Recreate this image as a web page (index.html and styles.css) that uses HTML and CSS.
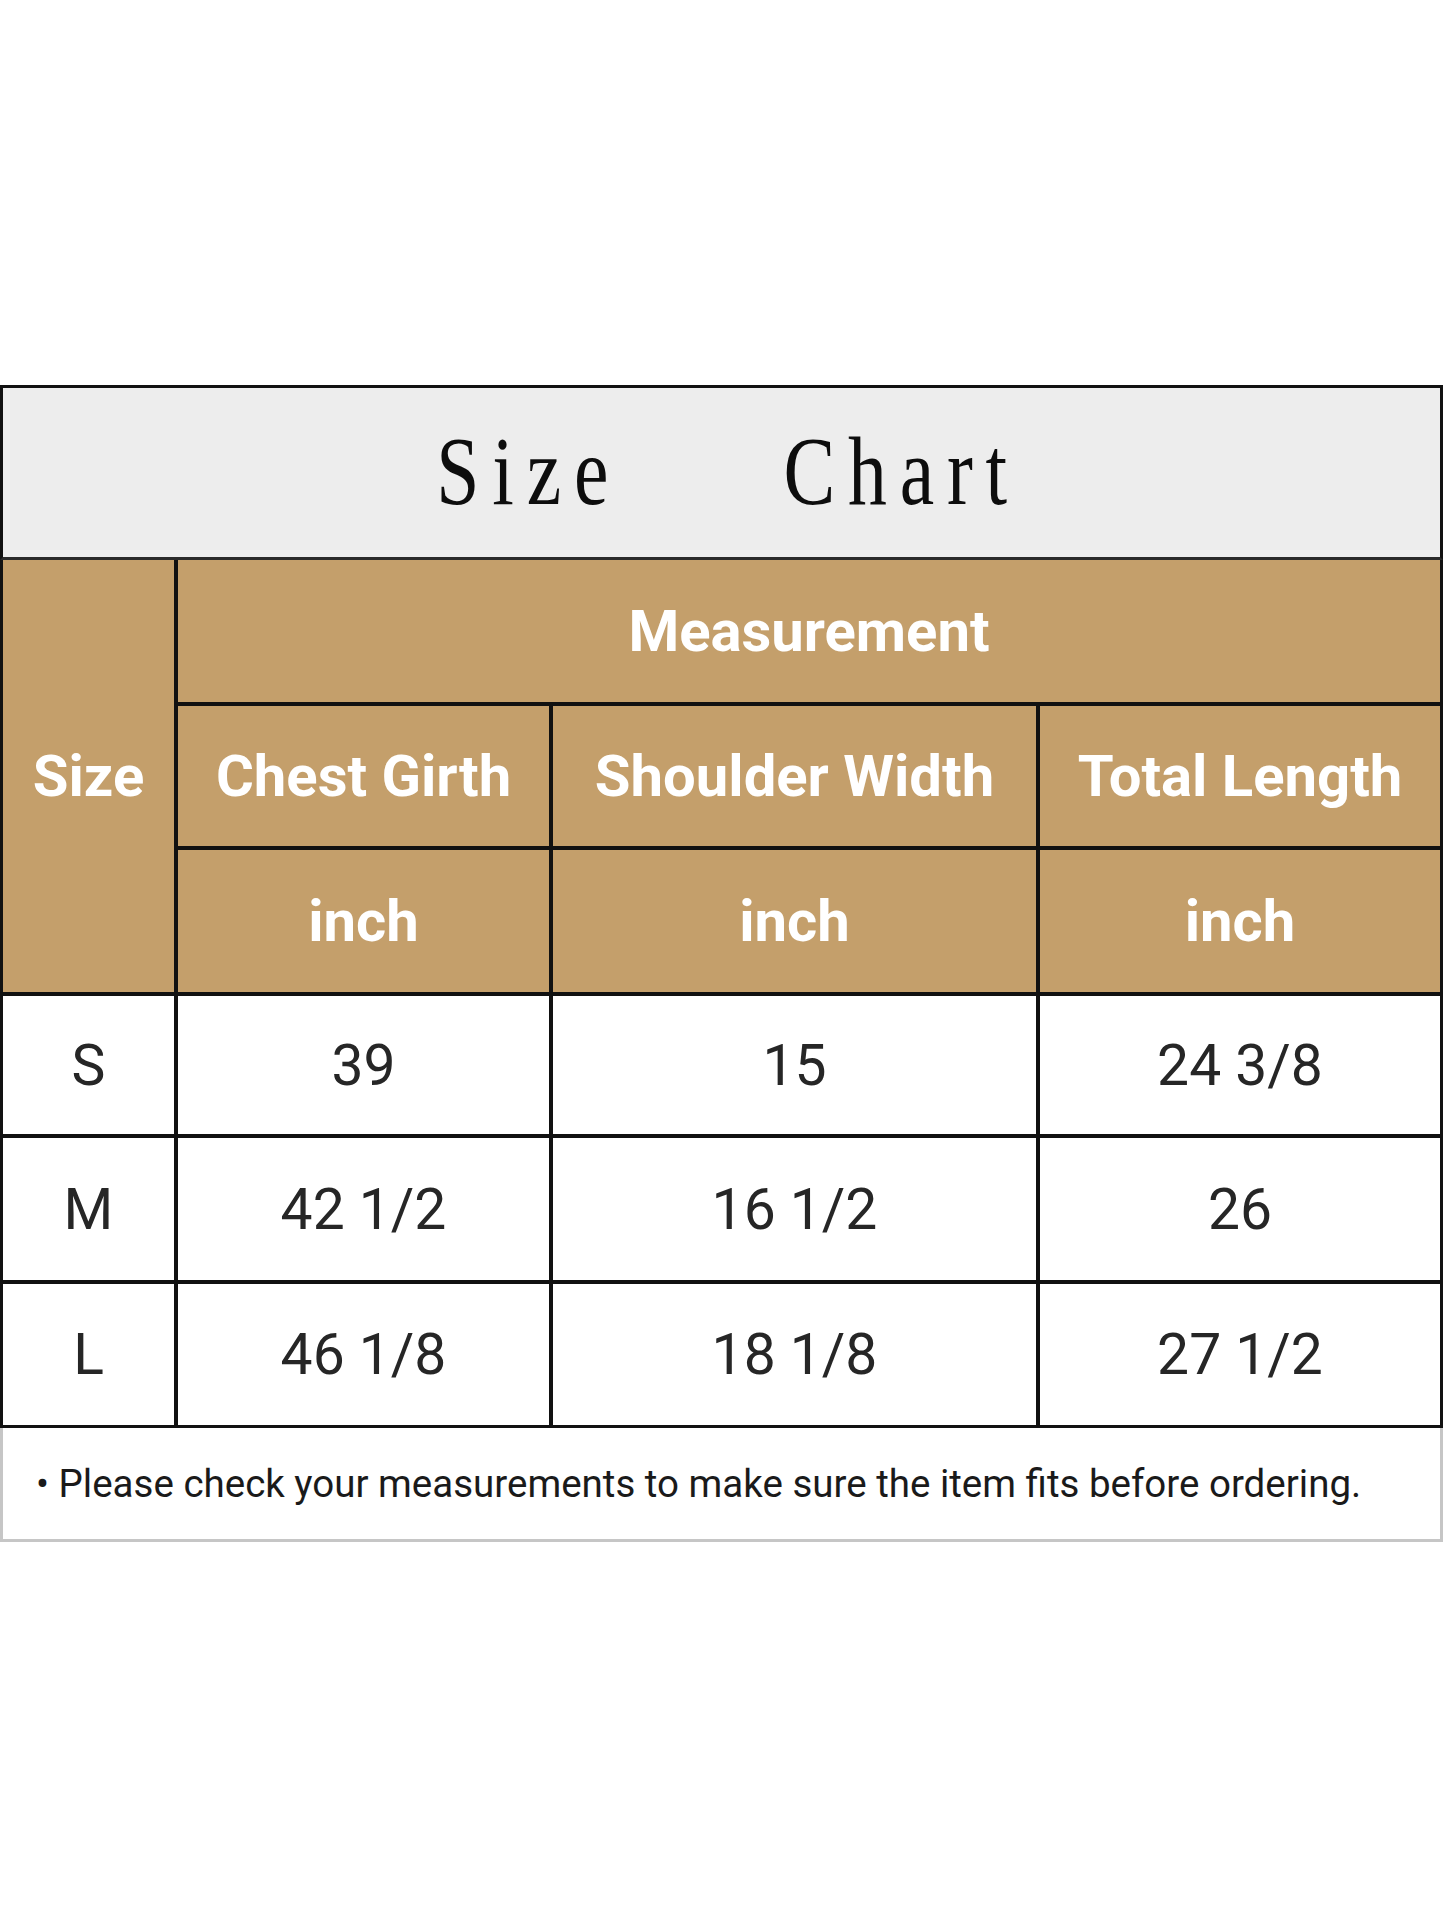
FILE: index.html
```html
<!DOCTYPE html>
<html lang="en">
<head>
<meta charset="utf-8">
<title>Size Chart</title>
<link rel="stylesheet" href="styles.css">
</head>
<body>
<div class="page">
  <div class="chart">
    <div class="title">
      <div class="title-text"><span>Size</span><span>Chart</span></div>
    </div>
    <div class="grid">
      <div class="cell head size-head">Size</div>
      <div class="cell head meas">Measurement</div>
      <div class="cell head">Chest Girth</div>
      <div class="cell head">Shoulder Width</div>
      <div class="cell head">Total Length</div>
      <div class="cell head">inch</div>
      <div class="cell head">inch</div>
      <div class="cell head">inch</div>

      <div class="cell data">S</div>
      <div class="cell data">39</div>
      <div class="cell data">15</div>
      <div class="cell data">24 3/8</div>

      <div class="cell data">M</div>
      <div class="cell data">42 1/2</div>
      <div class="cell data">16 1/2</div>
      <div class="cell data">26</div>

      <div class="cell data">L</div>
      <div class="cell data">46 1/8</div>
      <div class="cell data">18 1/8</div>
      <div class="cell data">27 1/2</div>
    </div>
    <div class="note">• Please check your measurements to make sure the item fits before ordering.</div>
  </div>
</div>
</body>
</html>
```

FILE: styles.css
```css
html, body {
  margin: 0;
  padding: 0;
  background: #ffffff;
}

.page {
  width: 1445px;
  height: 1927px;
  padding-top: 385px;
  box-sizing: border-box;
}

.chart {
  width: 1443px;
}

.title {
  background: #ededed;
  border: 3px solid #111111;
  border-bottom-color: #2a2a2a;
  display: flex;
  justify-content: center;
  align-items: flex-start;
  padding-top: 35px;
  height: 134px;
}

.title-text {
  display: inline-flex;
  gap: 203px;
  font-family: "Liberation Serif", "Times New Roman", serif;
  font-size: 97px;
  line-height: 97px;
  letter-spacing: 16px;
  padding-left: 16px;
  color: #0d0d0d;
  transform: scaleX(0.8);
  transform-origin: center;
}

.grid {
  display: grid;
  grid-template-columns: 171px 371px 483px 400px;
  grid-template-rows: 142px 140px 142px 138px 142px 141px;
  gap: 4px;
  background: #111111;
  border: 3px solid #111111;
  border-top: none;
}

.cell {
  display: flex;
  align-items: center;
  justify-content: center;
  font-family: Roboto, "Liberation Sans", Arial, sans-serif;
}

.head {
  background: #c49f6b;
  color: #ffffff;
  font-weight: 700;
  font-size: 58px;
}

.size-head {
  grid-row: 1 / span 3;
}

.meas {
  grid-column: 2 / span 3;
}

.data {
  background: #ffffff;
  color: #262626;
  font-weight: 400;
  font-size: 57px;
}

.note {
  border: 3px solid #c6c6c6;
  border-top: none;
  height: 74px;
  padding-top: 37px;
  padding-left: 33px;
  font-family: Roboto, "Liberation Sans", Arial, sans-serif;
  font-size: 38.5px;
  line-height: 38px;
  color: #1a1a1a;
  white-space: nowrap;
}
```
